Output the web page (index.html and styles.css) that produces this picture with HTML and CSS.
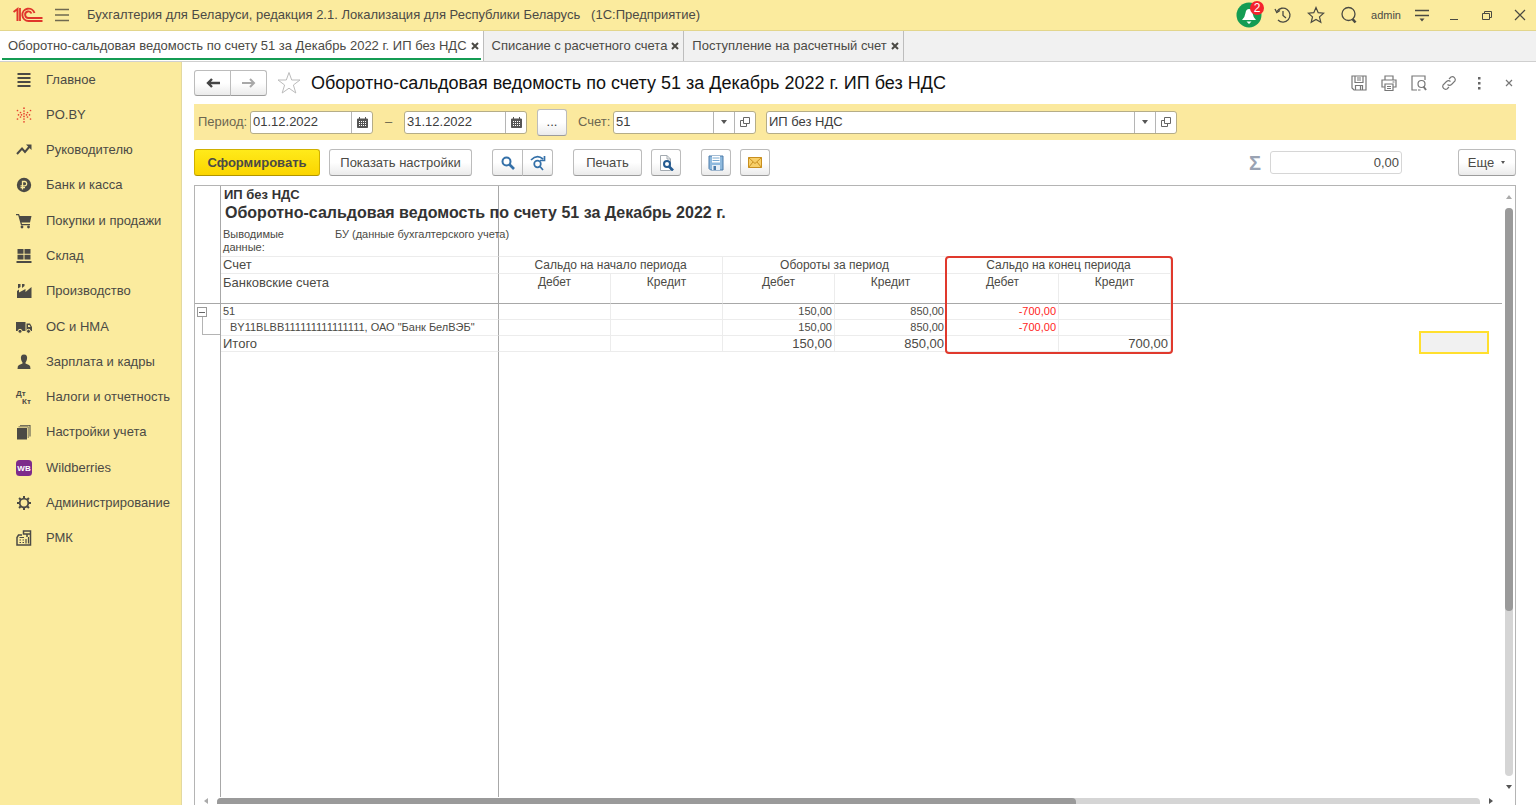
FILE: index.html
```
<!DOCTYPE html>
<html lang="ru">
<head>
<meta charset="utf-8">
<title>Оборотно-сальдовая ведомость по счету 51</title>
<link rel="stylesheet" href="styles.css">
</head>
<body>
<header class="titlebar">
  <svg class="logo" width="30" height="16" viewBox="0 0 30 16" role="img" aria-label="1С" fill="none" stroke="#e0352b">
    <path d="M0.5 5 L4.500 2 V14" stroke-width="2"/><path d="M7 1 V14" stroke-width="1.800"/>
    <path d="M21.500 6 A6.200 6.200 0 1 0 15.500 14 H29.500" stroke-width="1.900"/><path d="M18.500 6.500 A3.300 3.300 0 1 0 15.500 11 H29.500" stroke-width="1.900"/>
  </svg>
  <button class="plain menu" aria-label="Меню"><svg width="16" height="14" viewBox="0 0 16 14" stroke="#6f6950" stroke-width="1.500"><path d="M1 1.500H15M1 7H15M1 12.500H15"/></svg></button>
  <span class="app-name">Бухгалтерия для Беларуси, редакция 2.1. Локализация для Республики Беларусь &nbsp; (1С:Предприятие)</span>
  <div class="title-tools">
    <button class="plain bell" aria-label="Уведомления"><svg width="26" height="26" viewBox="0 0 26 26"><circle cx="13" cy="13" r="12.500" fill="#149c53"/><path d="M6 18 Q9 15 9.500 11 Q10 7 13 7 Q16 7 16.500 11 Q17 15 20 18Z M10.500 19.500H15.500L13 22Z" fill="#fff"/></svg><span class="count">2</span></button>
    <button class="plain" aria-label="История"><svg width="18" height="18" viewBox="0 0 18 18" fill="none" stroke="#4a4a42" stroke-width="1.300"><path d="M3 5.500A7 7 0 1 1 4 14"/><path d="M1 3L2.800 6.500L6 4.500M9 5V9.500L12 12"/></svg></button>
    <button class="plain" aria-label="Избранное"><svg width="18" height="18" viewBox="0 0 18 18" fill="none" stroke="#4a4a42" stroke-width="1.200"><path d="M9 1.500L11.200 6.700L16.700 7.200L12.500 10.900L13.800 16.300L9 13.400L4.200 16.300L5.500 10.900L1.300 7.200L6.800 6.700Z"/></svg></button>
    <button class="plain" aria-label="Поиск"><svg width="18" height="18" viewBox="0 0 18 18" fill="none" stroke="#4a4a42" stroke-width="1.300"><circle cx="8.500" cy="8" r="6.500"/><path d="M12.500 13L15.500 16.500" stroke-width="2.600"/></svg></button>
    <span class="user">admin</span>
    <button class="plain" aria-label="Настройки"><svg width="16" height="16" viewBox="0 0 16 16" stroke="#4a4a42" stroke-width="1.300"><path d="M1 3.500H15M1 8.500H15"/><path d="M5.500 11.500H10.500L8 14.500Z" fill="#4a4a42" stroke="none"/></svg></button>
    <button class="plain win" aria-label="Свернуть"><svg width="12" height="12" viewBox="0 0 12 12" stroke="#4a4a42"><path d="M2 10.500H10"/></svg></button>
    <button class="plain win" aria-label="Развернуть"><svg width="12" height="12" viewBox="0 0 12 12" fill="none" stroke="#4a4a42"><path d="M1.500 4.500H8.500V10.500H1.500ZM3.500 4V2.500H10.500V8.500H9"/></svg></button>
    <button class="plain win" aria-label="Закрыть"><svg width="12" height="12" viewBox="0 0 12 12" stroke="#4a4a42" stroke-width="1.200"><path d="M1 1L11 11M11 1L1 11"/></svg></button>
  </div>
</header>
<nav class="tabs" aria-label="Открытые окна">
  <div class="tab active"><a href="#">Оборотно-сальдовая ведомость по счету 51 за Декабрь 2022 г. ИП без НДС</a><button class="plain" aria-label="Закрыть"><svg class="cross" viewBox="0 0 8 8"><path d="M1 1L7 7M7 1L1 7"/></svg></button></div>
  <div class="tab"><a href="#">Списание с расчетного счета</a><button class="plain" aria-label="Закрыть"><svg class="cross" viewBox="0 0 8 8"><path d="M1 1L7 7M7 1L1 7"/></svg></button></div>
  <div class="tab"><a href="#">Поступление на расчетный счет</a><button class="plain" aria-label="Закрыть"><svg class="cross" viewBox="0 0 8 8"><path d="M1 1L7 7M7 1L1 7"/></svg></button></div>
</nav>
<div class="workspace">
  <nav class="sidebar" aria-label="Разделы">
    <ul>
      <li><a href="#"><svg viewBox="0 0 16 16"><path d="M1.500 1H14.500V3H1.500ZM1.500 5H14.500V7H1.500ZM1.500 9H14.500V11H1.500ZM1.500 13H14.500V15H1.500Z"/></svg>Главное</a></li>
      <li><a href="#"><svg viewBox="0 0 16 16"><path d="M8 1.200h0M8 4h0M8 6.700h0M8 9.400h0M8 12h0M8 14.800h0M1.500 3.500h0M1.500 12h0M14.500 3.500h0M14.500 12h0M4.500 5.500h0M4.500 10h0M11.500 5.500h0M11.500 10h0M2.500 7.800h0M5.500 7.800h0M10.500 7.800h0M13.500 7.800h0" fill="none" stroke="#e5402f" stroke-width="1.700" stroke-linecap="round"/></svg>PO.BY</a></li>
      <li><a href="#"><svg viewBox="0 0 16 16"><path d="M1 12L6 6.500L9 10L14 4" fill="none" stroke="#4b4a45" stroke-width="2"/><path d="M10 2.500H15.500V8Z"/></svg>Руководителю</a></li>
      <li><a href="#"><svg viewBox="0 0 16 16"><circle cx="8" cy="8" r="7.200"/><path d="M6.500 12.500V4.500H9A2.200 2.200 0 0 1 9 8.800H4.500M4.500 10.700H9" fill="none" stroke="#fbe99a" stroke-width="1.300"/></svg>Банк и касса</a></li>
      <li><a href="#"><svg viewBox="0 0 16 16"><path d="M0 1H3L3.800 3H15.500L14 9.500H5.500L6 11H14V12.200H5L2.200 2.200H0Z"/><circle cx="6" cy="14" r="1.400"/><circle cx="12.500" cy="14" r="1.400"/></svg>Покупки и продажи</a></li>
      <li><a href="#"><svg viewBox="0 0 16 16"><path d="M1.500 1H7.500V5.700H1.500ZM8.500 1H14.500V5.700H8.500ZM1.500 6.700H7.500V11.500H1.500ZM8.500 6.700H14.500V11.500H8.500ZM.5 13H15.500V15H.5Z"/></svg>Склад</a></li>
      <li><a href="#"><svg viewBox="0 0 16 16"><path d="M1 15V8L3 6.500V9.500L9.500 6V9L15.500 4V15ZM2 1H4.500V4L2 5.500ZM6 1H8.500V3L6 5Z"/></svg>Производство</a></li>
      <li><a href="#"><svg viewBox="0 0 16 16"><path d="M0 3H9.500V12H0ZM10.500 4.500H14L16 8V12H10.500ZM12 6V8H14.500L13.500 6Z" fill-rule="evenodd"/><g stroke="#fbe99a"><circle cx="4" cy="12.300" r="2"/><circle cx="12.500" cy="12.300" r="2"/></g></svg>ОС и НМА</a></li>
      <li><a href="#"><svg viewBox="0 0 16 16"><path d="M8 .5C10.500.5 11.500 2.500 11 5C10.700 7 9.800 8 9.500 8.500V9.500L13 11Q14.500 11.700 14.500 15H1.500Q1.500 11.700 3 11L6.500 9.500V8.500C6.200 8 5.300 7 5 5C4.500 2.500 5.500.5 8 .5Z"/></svg>Зарплата и кадры</a></li>
      <li><a href="#"><svg viewBox="0 0 16 16" class="letters"><text x="0" y="7">Дт</text><text x="6" y="15">Кт</text></svg>Налоги и отчетность</a></li>
      <li><a href="#"><svg viewBox="0 0 16 16"><path d="M1 4H11V15.500H1ZM2.500 2.500H12.500V14H11.800V3.200H2.500ZM4 1H14.500V12.500H13.500V1.800H4Z"/></svg>Настройки учета</a></li>
      <li><a href="#"><svg viewBox="0 0 16 16" class="wb"><rect width="16" height="16" rx="3.500"/><text x="8" y="11" text-anchor="middle">WB</text></svg>Wildberries</a></li>
      <li><a href="#"><svg viewBox="0 0 16 16"><g fill="none" stroke="#4b4a45"><circle cx="8" cy="8" r="4.300" stroke-width="1.800"/><path d="M8 1V3.500M8 12.500V15M1 8H3.500M12.500 8H15M3.050 3.050L4.800 4.800M11.200 11.200L12.950 12.950M3.050 12.950L4.800 11.200M11.200 4.800L12.950 3.050" stroke-width="2"/></g></svg>Администрирование</a></li>
      <li><a href="#"><svg viewBox="0 0 16 16"><g fill="none" stroke="#4b4a45" stroke-width="1.500"><path d="M6 5H2.500L1 7.500V15H14.500V4M7.500 1H14.500V4H7.500ZM11 4V7"/><path d="M3.500 7.500H8M3.500 10H5M3.500 12.500H5M6.500 10H8M6.500 12.500H8M10 9V13.500M12.500 7V13.500" stroke-width="1.200"/></g></svg>РМК</a></li>
    </ul>
  </nav>
  <main class="content">
    <div class="heading">
      <div class="split nav-split"><button class="btn" aria-label="Назад"><svg width="14" height="10" viewBox="0 0 14 10" fill="none" stroke="#444" stroke-width="2.400"><path d="M14 5H2M6 1L2 5L6 9"/></svg></button><button class="btn" aria-label="Вперед"><svg width="14" height="10" viewBox="0 0 14 10" fill="none" stroke="#a8a8a8" stroke-width="2"><path d="M0 5H12M8 1L12 5L8 9"/></svg></button></div>
      <button class="plain fav" aria-label="В избранное"><svg width="24" height="24" viewBox="0 0 24 24" fill="none" stroke="#bbb"><path d="M12 1.500L14.700 9H23L16.400 14L18.800 22L12 17.200L5.200 22L7.600 14L1 9H9.300Z"/></svg></button>
      <h1>Оборотно-сальдовая ведомость по счету 51 за Декабрь 2022 г. ИП без НДС</h1>
      <div class="page-tools">
        <button class="plain" aria-label="Сохранить"><svg viewBox="0 0 16 16"><path d="M1 1H15V15H3L1 13ZM4 1V7.500H12V1M6 3H10M6 5H10M4.500 15V10.500H11.500V15M9.500 11V15"/></svg></button>
        <button class="plain" aria-label="Печать"><svg viewBox="0 0 16 16"><path d="M4 5V1H12V5M4 12H1V5H15V12H12M4 9H12V15.500H4ZM6 11.500H10M6 13.500H10M11.500 7H13.500"/></svg></button>
        <button class="plain" aria-label="Просмотр"><svg viewBox="0 0 16 16"><path d="M6 15H1V1H14V5M9.500 15H7"/><circle cx="10.500" cy="9" r="3.500"/><path d="M12.500 11.500L15 15" stroke-width="2"/></svg></button>
        <button class="plain" aria-label="Ссылка"><svg viewBox="0 0 16 16"><path d="M6.500 9.500A3 3 0 0 0 10.500 9.500L14 6A3 3 0 0 0 10 2L8 4M9.500 6.500A3 3 0 0 0 5.500 6.500L2 10A3 3 0 0 0 6 14L8 12"/></svg></button>
        <button class="plain" aria-label="Еще"><svg viewBox="0 0 16 16"><path d="M7 2H9.500V4.500H7ZM7 7H9.500V9.500H7ZM7 12H9.500V14.500H7Z" fill="#666" stroke="none"/></svg></button>
        <button class="plain" aria-label="Закрыть"><svg viewBox="0 0 16 16"><path d="M5 5L11 11M11 5L5 11"/></svg></button>
      </div>
    </div>
    <div class="filters">
      <label for="from" class="period-label">Период:</label>
      <div class="field date"><input id="from" value="01.12.2022"><button aria-label="Календарь"><svg class="cal" viewBox="0 0 11 11"><path d="M.5 2H10.500V10.500H.5ZM2.500 0V2M8.500 0V2" /><path class="dots" d="M2 4.500H9.500M2 6.500H9.500M2 8.500H9.500"/></svg></button></div>
      <span class="dash">–</span>
      <div class="field date"><input aria-label="Конец периода" value="31.12.2022"><button aria-label="Календарь"><svg class="cal" viewBox="0 0 11 11"><path d="M.5 2H10.500V10.500H.5ZM2.500 0V2M8.500 0V2" /><path class="dots" d="M2 4.500H9.500M2 6.500H9.500M2 8.500H9.500"/></svg></button></div>
      <button class="btn icon pick">...</button>
      <label for="acc" class="acc-label">Счет:</label>
      <div class="field account"><input id="acc" value="51"><button aria-label="Список"><svg class="caret" viewBox="0 0 6 4"><path d="M0 0H6L3 4Z"/></svg></button><button aria-label="Открыть"><svg class="open" viewBox="0 0 10 10"><path d="M3.500.5H9.500V6.500H3.500ZM3 3.500H.5V9.500H6.500V7"/></svg></button></div>
      <div class="field org"><input aria-label="Организация" value="ИП без НДС"><button aria-label="Список"><svg class="caret" viewBox="0 0 6 4"><path d="M0 0H6L3 4Z"/></svg></button><button aria-label="Открыть"><svg class="open" viewBox="0 0 10 10"><path d="M3.500.5H9.500V6.500H3.500ZM3 3.500H.5V9.500H6.500V7"/></svg></button></div>
    </div>
    <div class="toolbar">
      <button class="btn primary">Сформировать</button>
      <button class="btn settings">Показать настройки</button>
      <div class="split group"><button class="btn icon" aria-label="Найти"><svg width="16" height="16" viewBox="0 0 16 16" fill="none" stroke="#3470a8" stroke-width="2"><circle cx="6.500" cy="6.500" r="4"/><path d="M9.500 9.500L14 14" stroke-width="2.600"/></svg></button><button class="btn icon" aria-label="Найти далее"><svg width="16" height="16" viewBox="0 0 16 16" fill="none" stroke="#3470a8" stroke-width="1.700"><circle cx="7.500" cy="9" r="3.300"/><path d="M10 11.500L13 15M1 5Q7-1 13 4M14.500 1V5.500H10"/></svg></button></div>
      <button class="btn print group">Печать</button>
      <button class="btn icon" aria-label="Предварительный просмотр"><svg width="16" height="16" viewBox="0 0 16 16" fill="none"><path d="M2.500.5H9L12.500 4V15.500H2.500ZM9 .5V4H12.500" stroke="#a3aab0" fill="#fff"/><circle cx="9" cy="9" r="3" stroke="#245b91" stroke-width="2"/><path d="M11 11.500L15 15.500" stroke="#245b91" stroke-width="2.600"/></svg></button>
      <button class="btn icon group" aria-label="Сохранить"><svg width="16" height="16" viewBox="0 0 16 16"><path d="M1 1H15V15H2.500L1 13.500Z" fill="#8eb9dd" stroke="#4a7ba9"/><path d="M4 1H12V7.500H4Z" fill="#fff"/><path d="M4.500 3H11.500M4.500 5.500H11.500" stroke="#78a9d0"/><path d="M4 10H12V15H4Z" fill="#e6eef5"/><path d="M5.500 11H8V15H5.500Z" fill="#4a7ba9"/></svg></button>
      <button class="btn icon" aria-label="Отправить"><svg width="14" height="11" viewBox="0 0 14 11" fill="#f8cf68" stroke="#c88f1f"><path d="M.5.500H13.500V10.500H.5Z"/><path d="M.5.500L7 6.500L13.500.5M.5 10.500L5 5M13.500 10.500L9 5" fill="none"/></svg></button>
      <label class="sigma" for="sum">Σ</label>
      <input id="sum" class="sum" value="0,00">
      <button class="btn more">Еще <svg class="caret" viewBox="0 0 6 4"><path d="M1 0H5L3 3Z"/></svg></button>
    </div>
    <section class="sheet">
      <div class="grid-area">
        <table>
          <colgroup><col class="c-tree"><col class="c-name"><col class="c-num"><col class="c-num"><col class="c-num"><col class="c-num"><col class="c-num"><col class="c-num"><col></colgroup>
          <tbody>
          <tr class="r-org"><td class="tree"></td><td class="frozen">ИП без НДС</td><td colspan="7"></td></tr>
          <tr class="r-title"><td class="tree"></td><td class="frozen">Оборотно-сальдовая ведомость по счету 51 за Декабрь 2022 г.</td><td colspan="7"></td></tr>
          <tr class="r-info"><td class="tree"></td><td class="frozen line"><div class="info"><span>Выводимые данные:</span><span>БУ (данные бухгалтерского учета)</span></div></td><td colspan="6" class="line"></td><td></td></tr>
          <tr class="r-group"><td class="tree"></td><th class="frozen line">Счет</th><th colspan="2" class="cell">Сальдо на начало периода</th><th colspan="2" class="cell">Обороты за период</th><th colspan="2" class="cell">Сальдо на конец периода</th><td></td></tr>
          <tr class="r-head"><td class="tree"></td><th class="frozen">Банковские счета</th><th class="cell">Дебет</th><th class="cell">Кредит</th><th class="cell">Дебет</th><th class="cell">Кредит</th><th class="cell">Дебет</th><th class="cell">Кредит</th><td></td></tr>
          <tr class="r-data"><td class="tree"><button class="toggle" aria-label="Свернуть группу"></button></td><td class="frozen line">51</td><td class="cell"></td><td class="cell"></td><td class="cell">150,00</td><td class="cell">850,00</td><td class="cell neg">-700,00</td><td class="cell"></td><td></td></tr>
          <tr class="r-data"><td class="tree"><span class="branch"></span></td><td class="frozen line child">BY11BLBB111111111111111, ОАО "Банк БелВЭБ"</td><td class="cell"></td><td class="cell"></td><td class="cell">150,00</td><td class="cell">850,00</td><td class="cell neg">-700,00</td><td class="cell"></td><td></td></tr>
          <tr class="r-data total"><td class="tree"></td><td class="frozen line">Итого</td><td class="cell"></td><td class="cell"></td><td class="cell">150,00</td><td class="cell">850,00</td><td class="cell"></td><td class="cell">700,00</td><td></td></tr>
          <tr><td class="tree"></td><td class="frozen"></td><td colspan="7"></td></tr>
          </tbody>
        </table>
        <div class="mark"></div>
        <div class="cursor"></div>
      </div>
      <div class="vbar"><svg class="caret" viewBox="0 0 6 4"><path d="M0 4H6L3 0Z" fill="#aaa"/></svg><div class="vtrack"><div class="vthumb"></div></div><svg class="caret" viewBox="0 0 6 4"><path d="M0 0H6L3 4Z"/></svg></div>
      <div class="hbar"><svg class="harrow" viewBox="0 0 4 6"><path d="M4 0V6L0 3Z" fill="#aaa"/></svg><div class="htrack"><div class="hthumb"></div></div><svg class="harrow" viewBox="0 0 4 6"><path d="M0 0V6L4 3Z" fill="#555"/></svg></div>
    </section>
  </main>
</div>
</body>
</html>
```
FILE: styles.css
```
* { box-sizing: border-box; }
html, body { height: 100%; }
body {
  margin: 0;
  display: flex;
  flex-direction: column;
  overflow: hidden;
  background: #fff;
  color: #4b4a45;
  font: 13px/16px "Liberation Sans", Arial, sans-serif;
}
button, input { font: inherit; color: inherit; margin: 0; }
a { color: inherit; text-decoration: none; }
svg { display: block; flex: none; }
.plain { display: flex; align-items: center; justify-content: center; padding: 0; border: 0; background: none; }

.titlebar {
  display: flex;
  align-items: center;
  height: 31px;
  flex: none;
  padding: 0 7px 1px 13px;
  background: #fbeb9e;
  border-bottom: 1px solid #e3d68c;
}
.menu { margin: 0 17px 0 11px; }
.app-name { white-space: nowrap; }
.title-tools { display: flex; align-items: center; margin-left: auto; gap: 15px; }
.bell { position: relative; margin-right: -3px; }
.count {
  position: absolute;
  top: -1px;
  right: -2px;
  width: 14px;
  height: 14px;
  border-radius: 7px;
  background: #f5222d;
  color: #fff;
  font-size: 12px;
  line-height: 14px;
}
.user { font-size: 11px; margin: 0 -2px; }
.win { width: 18px; }

.tabs {
  display: flex;
  flex: none;
  height: 31px;
  background: #f1f1f1;
  border-bottom: 1px solid #cfcfcf;
}
.tab { display: flex; align-items: center; gap: 4px; padding: 0 4px 0 8px; border-right: 1px solid #bdbdbd; white-space: nowrap; }
.tab.active { position: relative; background: #fff; }
.tab.active::after { content: ""; position: absolute; left: 2px; right: 2px; bottom: 1px; height: 2px; background: #149c53; }
.cross { width: 8px; height: 8px; stroke: #4b4a45; stroke-width: 2; }

.workspace { display: flex; flex: 1; min-height: 0; }
.sidebar { width: 182px; flex: none; background: #fbeb9e; border-right: 1px solid #e3d9a0; }
.sidebar ul { display: grid; grid-auto-rows: 1fr; height: 494px; margin: 0; padding: 0; list-style: none; }
.sidebar a { display: flex; align-items: center; height: 100%; padding-left: 16px; gap: 14px; white-space: nowrap; }
.sidebar svg { width: 16px; height: 16px; fill: #4b4a45; }
.letters { font-size: 8px; font-weight: bold; overflow: visible; }
.wb rect { fill: #7d2b8b; }
.wb text { fill: #fff; font-size: 8px; font-weight: bold; }

.content { display: flex; flex-direction: column; flex: 1; min-width: 0; padding: 0 20px 0 12px; }
.heading { display: flex; align-items: center; height: 42px; flex: none; }
h1 { margin: 0 0 0 10px; color: #111; font-size: 18px; line-height: 24px; font-weight: normal; white-space: nowrap; }
.fav { margin-left: 10px; }
.page-tools { display: flex; gap: 14px; margin-left: auto; margin-right: -1px; }
.page-tools svg { width: 16px; height: 16px; fill: none; stroke: #777; stroke-width: 1.200; }

.btn {
  display: flex;
  align-items: center;
  justify-content: center;
  height: 27px;
  padding: 0;
  border: 1px solid #bcbcbc;
  border-bottom-color: #9c9c9c;
  border-radius: 3px;
  background: linear-gradient(#fff 50%, #ebebeb);
  white-space: nowrap;
}
.icon { width: 30px; }
.split { display: flex; }
.split .icon { width: 31px; }
.split .btn:first-child { border-radius: 3px 0 0 3px; }
.split .btn:last-child { border-radius: 0 3px 3px 0; margin-left: -1px; }
.nav-split .btn { width: 37px; height: 26px; }

.filters { display: flex; align-items: center; height: 36px; flex: none; background: #fbe99e; color: #6c6650; }
.period-label { width: 56px; padding-left: 4px; }
.acc-label { width: 35px; }
.field { display: flex; height: 23px; border: 1px solid #b5ad88; border-radius: 3px; background: #fff; overflow: hidden; color: #3c3c3c; }
.field input { flex: 1; min-width: 0; border: 0; padding: 0 2px; background: none; }
.field button { display: flex; align-items: center; justify-content: center; width: 21px; padding: 0; border: 0; border-left: 1px solid #b5b5b5; background: none; }
.date { width: 123px; }
.account { width: 143px; margin-right: 10px; }
.org { width: 411px; }
.dash { width: 31px; text-align: center; }
.pick { margin: 0 11px 0 10px; color: #3c3c3c; }
.cal { width: 11px; height: 11px; fill: none; stroke: #555; stroke-width: 1; }
.cal path:first-child { fill: #555; }
.cal .dots { stroke: #fff; stroke-dasharray: 1 1; }
.caret { width: 6px; height: 4px; fill: #555; }
.open { width: 10px; height: 10px; fill: none; stroke: #666; }

.toolbar { display: flex; align-items: center; height: 45px; flex: none; gap: 9px; }
.group { margin-left: 11px; }
.primary { width: 126px; font-weight: bold; border-color: #d0b000; border-bottom-color: #b09400; background: linear-gradient(#ffea1a, #fbd500); }
.settings { width: 143px; }
.print { width: 69px; }
.sigma { margin-left: auto; color: #9aa3b3; font-size: 20px; font-weight: bold; line-height: 24px; }
.sum { width: 132px; height: 23px; padding: 0 2px; border: 1px solid #d6d6d6; border-radius: 3px; text-align: right; }
.more { width: 58px; gap: 6px; margin-left: 47px; }

.sheet {
  display: grid;
  grid-template-columns: minmax(0, 1fr) 13px;
  grid-template-rows: minmax(0, 1fr) 8px;
  flex: 1;
  min-height: 0;
  border: 1px solid #b4b4b4;
  border-bottom: 0;
}
.grid-area { position: relative; }
table { width: 100%; height: 100%; table-layout: fixed; border-collapse: separate; border-spacing: 0; }
.c-tree { width: 26px; }
.c-name { width: 278px; }
.c-num { width: 112px; }
td, th { padding: 0 2px; font-weight: normal; text-align: left; vertical-align: top; white-space: nowrap; line-height: 15px; }
.tree { padding: 0; border-right: 1px solid #a8a8a8; }
.frozen { border-right: 1px solid #a8a8a8; }
.line { border-bottom: 1px solid #ececec; }
.cell { border-right: 1px solid #ececec; border-bottom: 1px solid #ececec; text-align: center; font-size: 12px; }
.r-org { height: 17px; font-size: 13px; }
.r-org td, .r-title td { font-weight: bold; color: #333; }
.r-org .frozen { padding-left: 3px; line-height: 17px; }
.r-title .frozen { padding-left: 4px; }
.r-title { height: 20px; font-size: 16px; }
.r-title td { line-height: 20px; }
.r-info { height: 34px; font-size: 11px; }
.info { display: flex; padding-top: 5px; }
.info span { flex: none; line-height: 13px; }
.info span:first-child { width: 112px; padding-right: 30px; white-space: normal; }
.r-group { height: 17px; font-size: 13px; }
.r-group th { line-height: 16px; }
.r-head { height: 30px; font-size: 13px; }
.r-head th { line-height: 17px; }
.r-head td, .r-head th { border-bottom: 1px solid #a8a8a8; }
.r-data, .r-data .cell { height: 16px; font-size: 11px; }
.r-data .cell { text-align: right; }
.r-data .child { padding-left: 9px; }
.total, .total .cell { font-size: 13px; }
.r-data .neg { color: #ff1e1e; }
.toggle { position: relative; display: block; width: 10px; height: 10px; margin: 3px 0 0 2px; padding: 0; border: 1px solid #999; background: linear-gradient(#666, #666) center / 6px 1px no-repeat #fff; }
.toggle::after { content: ""; position: absolute; left: 4px; top: 9px; height: 4px; border-left: 1px solid #b4b4b4; }
.branch { display: block; width: 18px; height: 15px; margin-left: 7px; border: 1px solid #b4b4b4; border-width: 0 0 1px 1px; }
.mark { position: absolute; left: 750px; top: 70px; width: 228px; height: 98px; border: 2px solid #e0392d; border-radius: 4px; }
.cursor { position: absolute; right: 13px; top: 145px; width: 70px; height: 23px; border: 2px solid #ffdf2e; background: #f1f1f1; }

.vbar { display: flex; flex-direction: column; align-items: center; padding: 9px 0 8px; gap: 9px; }
.vtrack { flex: 1; width: 8px; border-radius: 4px; background: #d5d5d5; }
.vthumb { height: 71%; border-radius: 4px; background: #9a9a9a; }
.hbar { grid-column: 1 / -1; display: flex; align-items: center; padding: 0 22px 0 9px; gap: 9px; }
.htrack { flex: 1; height: 6px; border-radius: 4px 4px 0 0; background: #d5d5d5; }
.hthumb { width: 68%; height: 6px; border-radius: 4px 4px 0 0; background: #9a9a9a; }
.harrow { width: 4px; height: 6px; }
```
